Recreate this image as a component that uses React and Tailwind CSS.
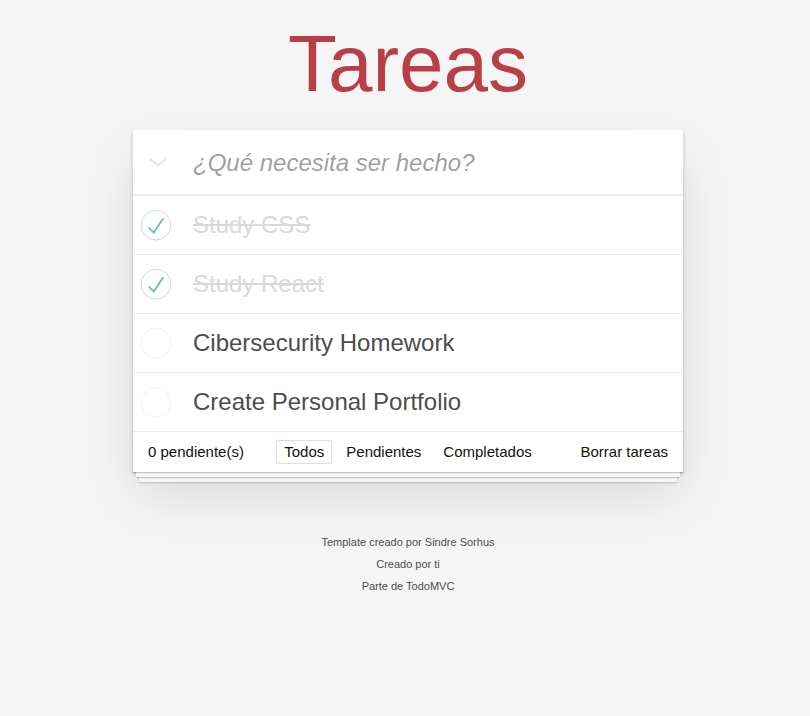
import React from "react";

const todos = [
  { text: "Study CSS", done: true },
  { text: "Study React", done: true },
  { text: "Cibersecurity Homework", done: false },
  { text: "Create Personal Portfolio", done: false },
];

function Toggle({ done }) {
  return (
    <svg width="40" height="40" viewBox="-10 -18 100 135" className="shrink-0">
      <circle cx="50" cy="50" r="50" fill="none" stroke={done ? "#bddad5" : "#ededed"} strokeWidth="3" />
      {done && <path fill="#5dc2af" d="M72 25L42 71 27 56l-4 4 20 20 34-52z" />}
    </svg>
  );
}

export default function App() {
  return (
    <div
      className="min-h-screen bg-[#f5f5f5] text-[#4d4d4d] pt-[24px] pl-[6px]"
      style={{ fontFamily: '"Liberation Sans", Arial, Helvetica, sans-serif' }}
    >
      <div className="w-[550px] mx-auto">
        <h1 className="h-[80px] leading-[80px] text-[80px] font-normal text-center text-[#b83f45] mb-[26px]">
          Tareas
        </h1>

        <section className="bg-white relative shadow-[0_2px_4px_0_rgba(0,0,0,0.2),0_25px_50px_0_rgba(0,0,0,0.1)]">
          <header className="flex items-center h-[65px] shadow-[inset_0_-2px_1px_rgba(0,0,0,0.03)]">
            <div className="w-[60px] h-full flex items-center pl-[16px] shrink-0">
              <svg width="18" height="9" viewBox="0 0 18 9">
                <polyline points="1,1 9,7.5 17,1" fill="none" stroke="#e3e3e3" strokeWidth="2" />
              </svg>
            </div>
            <input
              className="flex-1 h-full pr-[16px] text-[24px] outline-none bg-transparent placeholder:italic placeholder:text-[rgba(0,0,0,0.4)]"
              style={{ fontFamily: '"Liberation Sans", Arial, sans-serif' }}
              placeholder="¿Qué necesita ser hecho?"
            />
          </header>

          <ul className="border-t border-[#e6e6e6]">
            {todos.map((t) => (
              <li key={t.text} className="flex items-center h-[59px] border-b border-[#ededed]">
                <div className="w-[60px] shrink-0 flex items-center">
                  <Toggle done={t.done} />
                </div>
                <span
                  className={
                    "text-[24px] leading-[29px] pb-[2px] " +
                    (t.done ? "text-[#d9d9d9] line-through" : "text-[#4d4d4d]")
                  }
                >
                  {t.text}
                </span>
              </li>
            ))}
          </ul>

          <footer className="relative h-[40px] px-[15px] flex items-center justify-between text-[15px] text-[#111] before:content-[''] before:absolute before:left-0 before:right-0 before:bottom-0 before:h-[50px] before:overflow-hidden before:pointer-events-none before:shadow-[0_1px_1px_rgba(0,0,0,0.2),0_8px_0_-3px_#f6f6f6,0_9px_1px_-3px_rgba(0,0,0,0.2),0_16px_0_-6px_#f6f6f6,0_17px_2px_-6px_rgba(0,0,0,0.2)]">
            <span className="relative">0 pendiente(s)</span>
            <ul className="absolute left-0 right-0 flex justify-center pointer-events-none">
              <li className="m-[3px] px-[7px] py-[3px] leading-[16px] border border-[#efd5d5] rounded-[3px] pointer-events-auto">Todos</li>
              <li className="m-[3px] px-[7px] py-[3px] leading-[16px] border border-transparent rounded-[3px] pointer-events-auto">Pendientes</li>
              <li className="m-[3px] px-[7px] py-[3px] leading-[16px] border border-transparent rounded-[3px] pointer-events-auto">Completados</li>
            </ul>
            <span className="relative">Borrar tareas</span>
          </footer>
        </section>

        <div className="mt-[65px] text-center text-[11px] leading-[11px] text-[#4d4d4d]">
          <p>Template creado por Sindre Sorhus</p>
          <p className="mt-[11px]">Creado por ti</p>
          <p className="mt-[11px]">Parte de TodoMVC</p>
        </div>
      </div>
    </div>
  );
}
